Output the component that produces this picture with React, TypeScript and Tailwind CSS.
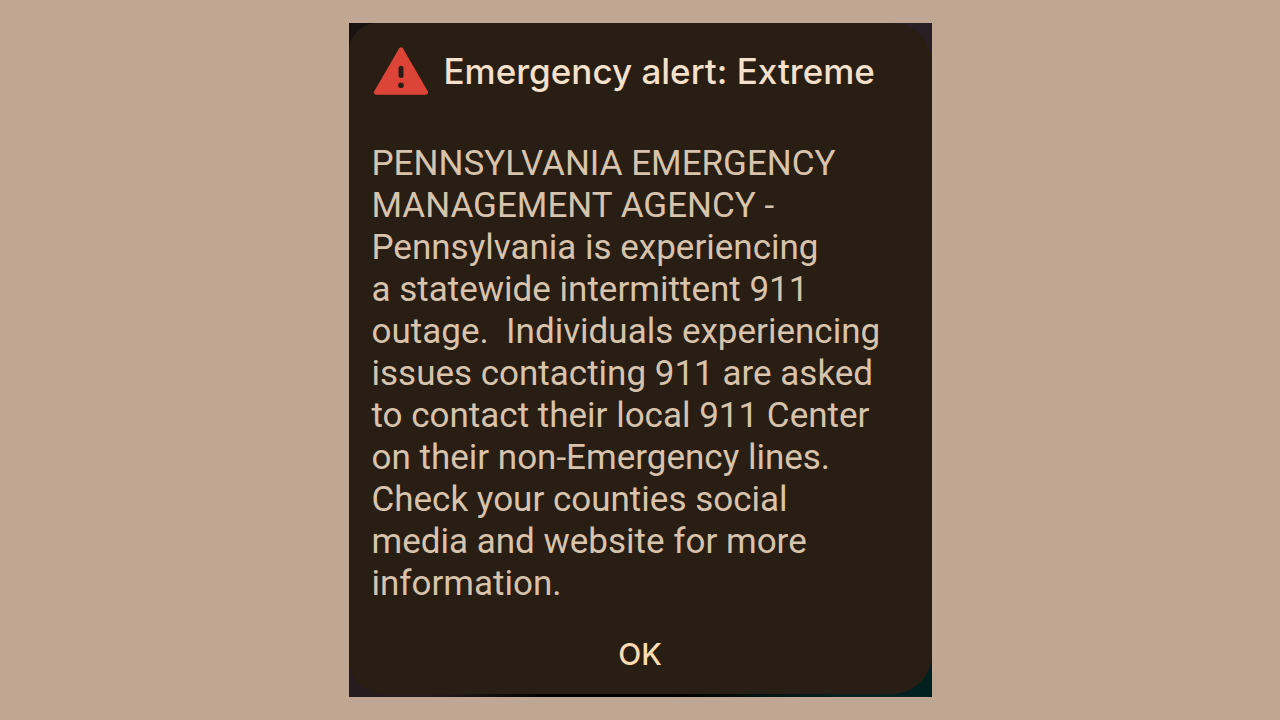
const message =
  'PENNSYLVANIA EMERGENCY MANAGEMENT AGENCY - Pennsylvania is experiencing a\u00a0statewide intermittent 911 outage.\u00a0 Individuals experiencing issues contacting 911 are asked to contact their local 911 Center on their non-Emergency lines. Check your counties social media and website for more information.';

function WarningIcon() {
  return (
    <svg className="h-12 w-14 shrink-0" viewBox="-1 0 56 48" aria-hidden="true">
      <path
        d="M26.2 1.2a2.2 2.2 0 0 1 3.7 0l25 43.2a2.2 2.2 0 0 1-1.9 3.3H3a2.2 2.2 0 0 1-1.9-3.3z"
        fill="#db4437"
      />
      <path d="M28 21.2v7.2" stroke="#281e13" strokeWidth="5" strokeLinecap="round" />
      <circle cx="28" cy="38.2" r="2.8" fill="#281e13" />
    </svg>
  );
}

export default function App() {
  return (
    <main className="flex min-h-screen items-center justify-center bg-[#bfa793]">
      {/* Dimmed wallpaper showing around the dialog corners */}
      <div className="w-full max-w-[583px] bg-[conic-gradient(#1a1113,#2a1f25_40deg,#2a1f25_80deg,#00211f_120deg,#00211f_150deg,#000_175deg,#000_195deg,#261c1f_212deg,#261c1f_250deg,#1a1113_320deg)] pb-[3px]">
        <section
          role="alertdialog"
          aria-labelledby="alert-title"
          aria-describedby="alert-message"
          className="flex flex-col rounded-[40px] rounded-tl-[28px] rounded-bl-[36px] bg-[#281e13] px-[23px] pt-6 pb-5"
        >
          <header className="flex items-center gap-4">
            <WarningIcon />
            <h1
              id="alert-title"
              className="font-['Inter',sans-serif] text-[35px] leading-10 font-medium whitespace-nowrap text-[#f5e0cb]"
            >
              Emergency alert: Extreme
            </h1>
          </header>
          <p
            id="alert-message"
            className="mt-12 pr-6 font-['Roboto',sans-serif] text-[35px] leading-[42px] text-[#d8c3ac]"
          >
            {message}
          </p>
          <button
            type="button"
            className="mt-[29px] self-center px-4 font-['Inter',sans-serif] text-[30px] leading-10 font-medium text-[#fbdcb2]"
          >
            OK
          </button>
        </section>
      </div>
    </main>
  );
}
